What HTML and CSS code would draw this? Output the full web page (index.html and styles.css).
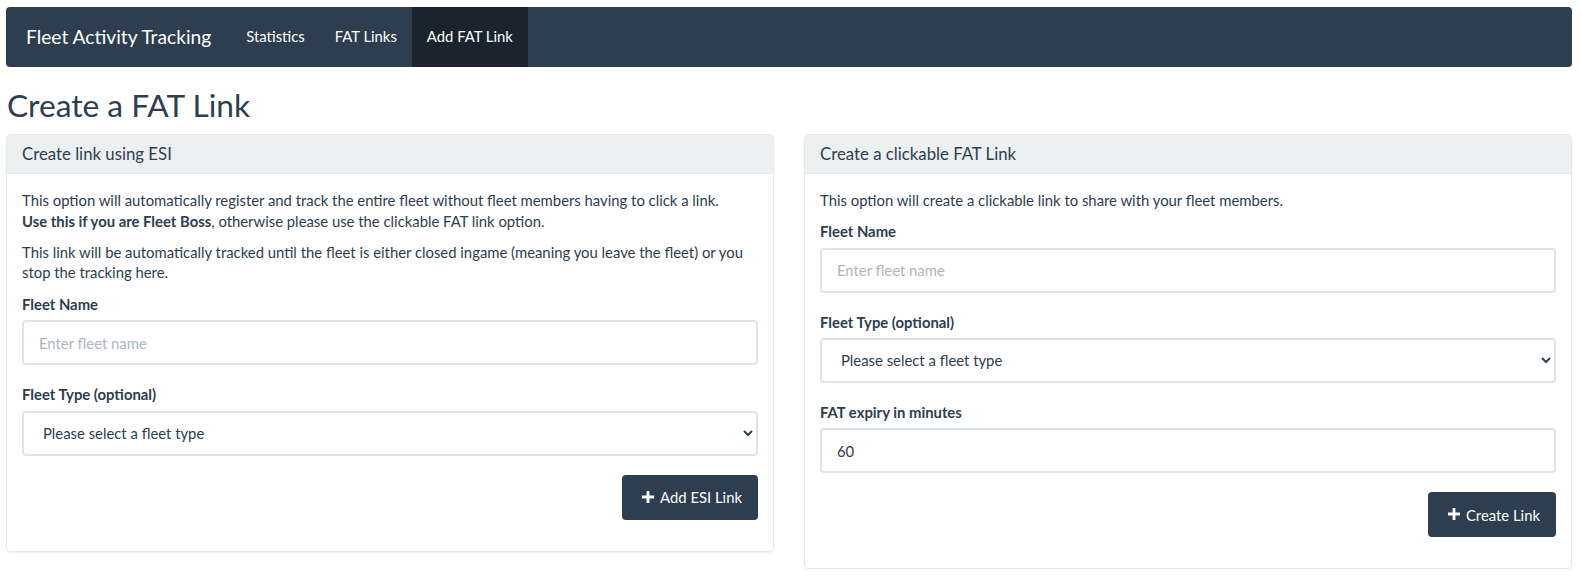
FILE: index.html
```html
<!DOCTYPE html>
<html lang="en">
<head>
<meta charset="utf-8">
<title>Add FAT Link</title>
<link rel="stylesheet" href="styles.css">
</head>
<body>
<div class="page">
  <nav class="navbar">
    <span class="brand">Fleet Activity Tracking</span>
    <a class="nav-link">Statistics</a>
    <a class="nav-link">FAT Links</a>
    <a class="nav-link active">Add FAT Link</a>
  </nav>

  <h2 class="page-title">Create a FAT Link</h2>

  <div class="cards">
    <div class="card">
      <div class="card-header">Create link using ESI</div>
      <div class="card-body">
        <p>This option will automatically register and track the entire fleet without fleet members having to click a link.<br><b>Use this if you are Fleet Boss</b>, otherwise please use the clickable FAT link option.</p>
        <p>This link will be automatically tracked until the fleet is either closed ingame (meaning you leave the fleet) or you stop the tracking here.</p>
        <div class="form-group">
          <label class="label">Fleet Name</label>
          <input class="form-control" type="text" placeholder="Enter fleet name">
        </div>
        <div class="form-group">
          <label class="label">Fleet Type (optional)</label>
          <select class="form-control select">
            <option>Please select a fleet type</option>
          </select>
        </div>
        <div class="actions">
          <button class="btn"><svg class="plus" viewBox="0 0 12 12" width="12" height="12"><path d="M4.6 0h2.8v4.6H12v2.8H7.4V12H4.6V7.4H0V4.6h4.6z" fill="#fff"/></svg>Add ESI Link</button>
        </div>
      </div>
    </div>

    <div class="card">
      <div class="card-header">Create a clickable FAT Link</div>
      <div class="card-body">
        <p>This option will create a clickable link to share with your fleet members.</p>
        <div class="form-group">
          <label class="label">Fleet Name</label>
          <input class="form-control" type="text" placeholder="Enter fleet name">
        </div>
        <div class="form-group">
          <label class="label">Fleet Type (optional)</label>
          <select class="form-control select">
            <option>Please select a fleet type</option>
          </select>
        </div>
        <div class="form-group">
          <label class="label">FAT expiry in minutes</label>
          <input class="form-control" type="text" value="60">
        </div>
        <div class="actions">
          <button class="btn"><svg class="plus" viewBox="0 0 12 12" width="12" height="12"><path d="M4.6 0h2.8v4.6H12v2.8H7.4V12H4.6V7.4H0V4.6h4.6z" fill="#fff"/></svg>Create Link</button>
        </div>
      </div>
    </div>
  </div>
</div>
</body>
</html>
```

FILE: styles.css
```css
* { box-sizing: border-box; }

html, body {
  margin: 0;
  padding: 0;
  background: #ffffff;
}

body {
  font-family: Lato, "Open Sans", "Liberation Sans", sans-serif;
  font-size: 14.85px;
  line-height: 21.43px;
  color: #2c3e50;
}

.page {
  padding: 7px 9px 0 6px;
}

.navbar {
  display: flex;
  align-items: stretch;
  height: 60px;
  background: #2c3e50;
  border-radius: 4px;
  padding-left: 20px;
}

.brand {
  display: flex;
  align-items: center;
  font-size: 19.2px;
  color: #ffffff;
  padding-right: 20px;
}

.nav-link {
  display: flex;
  align-items: center;
  padding: 0 15px;
  color: #ffffff;
  font-size: 14.85px;
  cursor: pointer;
}

.nav-link.active {
  background: #1a242f;
}

.page-title {
  font-size: 31.7px;
  font-weight: 400;
  line-height: 1.1;
  margin: 21px 0 11px 1px;
  color: #2c3e50;
}

.cards {
  display: grid;
  grid-template-columns: 1fr 1fr;
  column-gap: 30px;
  align-items: start;
}

.card {
  border: 1px solid #e6e9ec;
  border-radius: 5px;
  background: #fff;
  box-shadow: 0 1px 2px rgba(0, 0, 0, 0.06);
  overflow: hidden;
}

.card-header {
  background: #ecf0f1;
  border-bottom: 1px solid #e6e9ec;
  padding: 8px 15px;
  font-size: 16.8px;
  line-height: 22px;
}

.card-body {
  padding: 16px 15px 15px;
}

.card-body p {
  margin: 0 0 10.5px;
  line-height: 20.7px;
}

.form-group {
  display: flex;
  flex-direction: column;
  margin-bottom: 19px;
}

.label {
  font-weight: 700;
  margin-bottom: 5px;
}

.form-control {
  display: block;
  width: 100%;
  height: 45px;
  padding: 10px 15px;
  font-family: inherit;
  font-size: 14.85px;
  color: #2c3e50;
  background: #ffffff;
  border: 2px solid #dce4ec;
  border-radius: 4px;
  outline: none;
}

.form-control::placeholder {
  color: #acb6c0;
}

.select {
  padding-left: 15px;
  padding-right: 8px;
}

.actions {
  display: flex;
  justify-content: flex-end;
  margin-bottom: 16px;
}

.btn {
  display: inline-flex;
  align-items: center;
  gap: 6px;
  height: 45px;
  padding: 0 16px 0 20px;
  background: #2c3e50;
  color: #ffffff;
  border: none;
  border-radius: 4px;
  font-family: inherit;
  font-size: 14.85px;
}

.plus {
  flex: none;
  margin-top: -1px;
}
```
